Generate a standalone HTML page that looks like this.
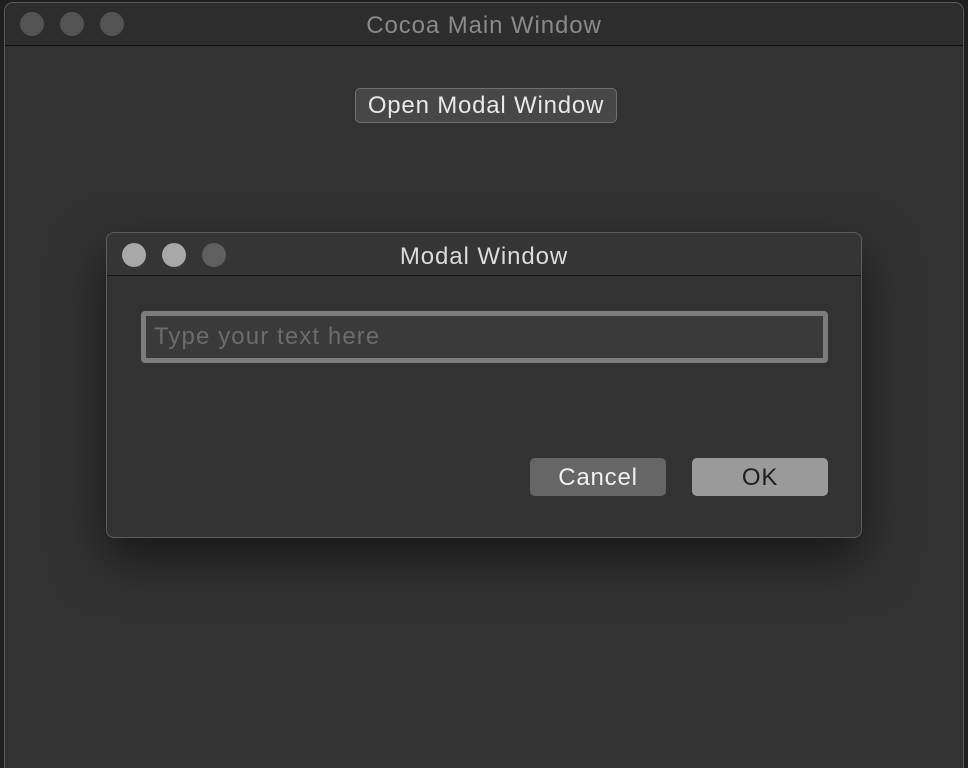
<!DOCTYPE html>
<html style="overflow:hidden"><head><style>
html,body{margin:0;width:968px;height:768px;overflow:hidden}
body{background:#1f1f1f;font-family:"Liberation Sans",sans-serif;position:relative}
.main{position:absolute;left:4px;top:2px;width:960px;height:766px;background:#323232;border:1px solid #5a5a5a;border-bottom:none;border-radius:9px 9px 0 0;box-sizing:border-box;overflow:hidden}
.tb{position:absolute;left:0;top:0;right:0;height:42px;background:#2d2d2d;border-bottom:1px solid #0e0e0e}
.dot{position:absolute;width:24px;height:24px;border-radius:50%}
.title{position:absolute;left:0;right:0;text-align:center;color:#8a8a8a;font-size:24px;letter-spacing:0.9px}
.btn{position:absolute;box-sizing:border-box;border-radius:5px;text-align:center;font-size:24px;letter-spacing:0.8px}
.modal{position:absolute;left:106px;top:232px;width:756px;height:306px;background:#323232;border:1px solid #5e5e5e;border-radius:8px;box-sizing:border-box;box-shadow:0 20px 50px rgba(0,0,0,.55);overflow:hidden}
</style></head><body>
<div class="main">
 <div class="tb">
  <div class="dot" style="left:15px;top:9px;background:#545454"></div>
  <div class="dot" style="left:55px;top:9px;background:#545454"></div>
  <div class="dot" style="left:95px;top:9px;background:#545454"></div>
  <div class="title" style="top:9px">Cocoa Main Window</div>
 </div>
 <div class="btn" style="left:350px;top:85px;width:262px;height:35px;background:#474747;border:1px solid #707070;color:#e8e8e8;line-height:34px">Open Modal Window</div>
</div>
<div class="modal">
 <div class="tb" style="background:#353535;border-bottom:1px solid #151515">
  <div class="dot" style="left:15px;top:10px;background:#a8a8a8"></div>
  <div class="dot" style="left:55px;top:10px;background:#a8a8a8"></div>
  <div class="dot" style="left:95px;top:10px;background:#5f5f5f"></div>
  <div class="title" style="top:10px;color:#dcdcdc">Modal Window</div>
 </div>
 <div style="position:absolute;left:34px;top:78px;width:687px;height:52px;box-sizing:border-box;border:5px solid #7c7c7c;border-radius:4px;background:#3a3a3a;color:#6c6c6c;font-size:24px;letter-spacing:1.1px;line-height:42px;padding-left:8px">Type your text here</div>
 <div class="btn" style="left:423px;top:225px;width:136px;height:38px;background:#666;color:#efefef;line-height:39px">Cancel</div>
 <div class="btn" style="left:585px;top:225px;width:136px;height:38px;background:#9a9a9a;color:#1e1e1e;line-height:39px">OK</div>
</div>
</body></html>
